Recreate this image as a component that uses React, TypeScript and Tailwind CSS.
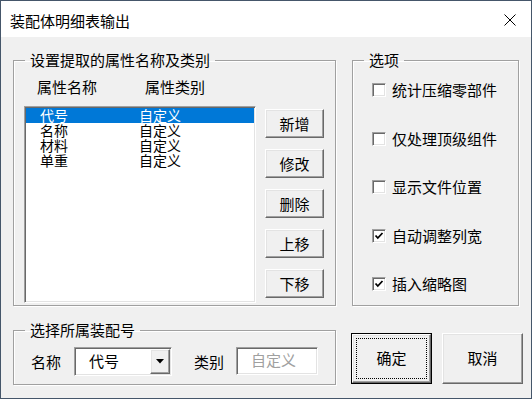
import React from "react";

const sunken =
  "border border-t-[#a0a0a0] border-l-[#a0a0a0] border-r-white border-b-white shadow-[inset_1px_1px_0_#696969,inset_-1px_-1px_0_#e3e3e3]";
const raised =
  "border border-t-white border-l-white border-r-[#696969] border-b-[#696969] shadow-[inset_-1px_-1px_0_#a0a0a0,inset_1px_1px_0_#e3e3e3] bg-[#f0f0f0]";
const group =
  "border border-[#a0a0a0] shadow-[inset_1px_1px_0_#fff,1px_1px_0_#fff] p-0 m-0 min-w-0";
const legend = "ml-[11px] px-[5px] text-[15px] leading-[20px] text-black";

function Check({ checked }: { checked?: boolean }) {
  return (
    <div className={`w-[14px] h-[14px] bg-white ${sunken} flex items-center justify-center`}>
      {checked && (
        <svg width="10" height="10" viewBox="0 0 10 10">
          <polyline points="1.5,4.5 3.8,7 8.5,2" fill="none" stroke="#000" strokeWidth="1.8" />
        </svg>
      )}
    </div>
  );
}

function Btn({ label }: { label: string }) {
  return (
    <div className={`w-[59px] h-[29px] ${raised} flex items-center justify-center text-[15px] leading-none`}>
      {label}
    </div>
  );
}

export default function App() {
  const rows = ["代号", "名称", "材料", "单重"];
  const opts: [string, boolean][] = [
    ["统计压缩零部件", false],
    ["仅处理顶级组件", false],
    ["显示文件位置", false],
    ["自动调整列宽", true],
    ["插入缩略图", true],
  ];
  return (
    <div className="w-[532px] h-[399px] border border-[#45566a] flex flex-col font-['Noto_Sans_CJK_SC',sans-serif] text-black overflow-hidden">
      <div className="h-[36px] bg-white flex items-center justify-between pl-[9px] pr-[15px]">
        <span className="text-[15px] leading-none pt-[2px]">装配体明细表输出</span>
        <svg width="12" height="12" viewBox="0 0 12 12" className="mt-[1px]">
          <line x1="0.5" y1="0.5" x2="11.5" y2="11.5" stroke="#000" strokeWidth="1" />
          <line x1="11.5" y1="0.5" x2="0.5" y2="11.5" stroke="#000" strokeWidth="1" />
        </svg>
      </div>
      <div className="flex-1 bg-[#f0f0f0] pl-[12px] pt-[13px]">
        <div className="flex">
          <fieldset className={`${group} w-[323px] h-[256px]`}>
            <legend className={legend}>设置提取的属性名称及类别</legend>
            <div className="flex items-start pl-[10px]">
              <div className="pt-[7px] flex flex-col">
                <div className="flex pl-[13px] text-[15px] leading-[20px]">
                  <span className="w-[108px]">属性名称</span>
                  <span>属性类别</span>
                </div>
                <div className={`mt-[9px] w-[232px] h-[197px] bg-white ${sunken} p-[1px]`}>
                  {rows.map((r, i) => (
                    <div
                      key={r}
                      className={`grid grid-cols-[99px_1fr] pl-[14px] h-[15px] text-[14px] leading-[15px] ${
                        i === 0 ? "bg-[#0078d7] text-white" : ""
                      }`}
                    >
                      <span>{r}</span>
                      <span>自定义</span>
                    </div>
                  ))}
                </div>
              </div>
              <div className="ml-[9px] pt-[39px] flex flex-col gap-[11px]">
                {["新增", "修改", "删除", "上移", "下移"].map((b) => (
                  <Btn key={b} label={b} />
                ))}
              </div>
            </div>
          </fieldset>
          <fieldset className={`${group} ml-[16px] w-[167px] h-[256px]`}>
            <legend className={legend}>选项</legend>
            <div className="pl-[19px] pt-[10px] flex flex-col gap-[28.5px]">
              {opts.map(([t, c]) => (
                <div key={t} className="flex items-center h-[20px]">
                  <Check checked={c} />
                  <span className="ml-[6px] text-[15px] leading-[20px]">{t}</span>
                </div>
              ))}
            </div>
          </fieldset>
        </div>
        <div className="flex items-start mt-[14px]">
          <fieldset className={`${group} w-[323px] h-[65px]`}>
            <legend className={legend}>选择所属装配号</legend>
            <div className="flex items-start pl-[17px] pt-[7px]">
              <span className="text-[15px] leading-[29px]">名称</span>
              <div className={`ml-[13px] w-[98px] h-[29px] bg-white ${sunken} flex items-stretch p-[1px]`}>
                <span className="flex-1 pl-[13px] text-[15px] leading-[20px] pt-[2px]">代号</span>
                <div className={`w-[20px] ${raised} flex items-center justify-center`}>
                  <svg width="8" height="5" viewBox="0 0 8 5">
                    <polygon points="0,0 8,0 4,4.5" fill="#000" />
                  </svg>
                </div>
              </div>
              <span className="ml-[22px] text-[15px] leading-[29px]">类别</span>
              <div className={`ml-[12px] w-[82px] h-[28px] bg-white ${sunken} pl-[14px] text-[15px] leading-[24px] text-[#a0a0a0]`}>
                自定义
              </div>
            </div>
          </fieldset>
          <div className="ml-[15px] mt-[13px] flex gap-[10px]">
            <div className="w-[81px] h-[51px] border border-black">
              <div className={`w-full h-full ${raised} p-[3px]`}>
                <div className="w-full h-full border border-dotted border-black flex items-center justify-center text-[15px]">
                  确定
                </div>
              </div>
            </div>
            <div className={`w-[81px] h-[51px] ${raised} flex items-center justify-center text-[15px]`}>取消</div>
          </div>
        </div>
      </div>
    </div>
  );
}
